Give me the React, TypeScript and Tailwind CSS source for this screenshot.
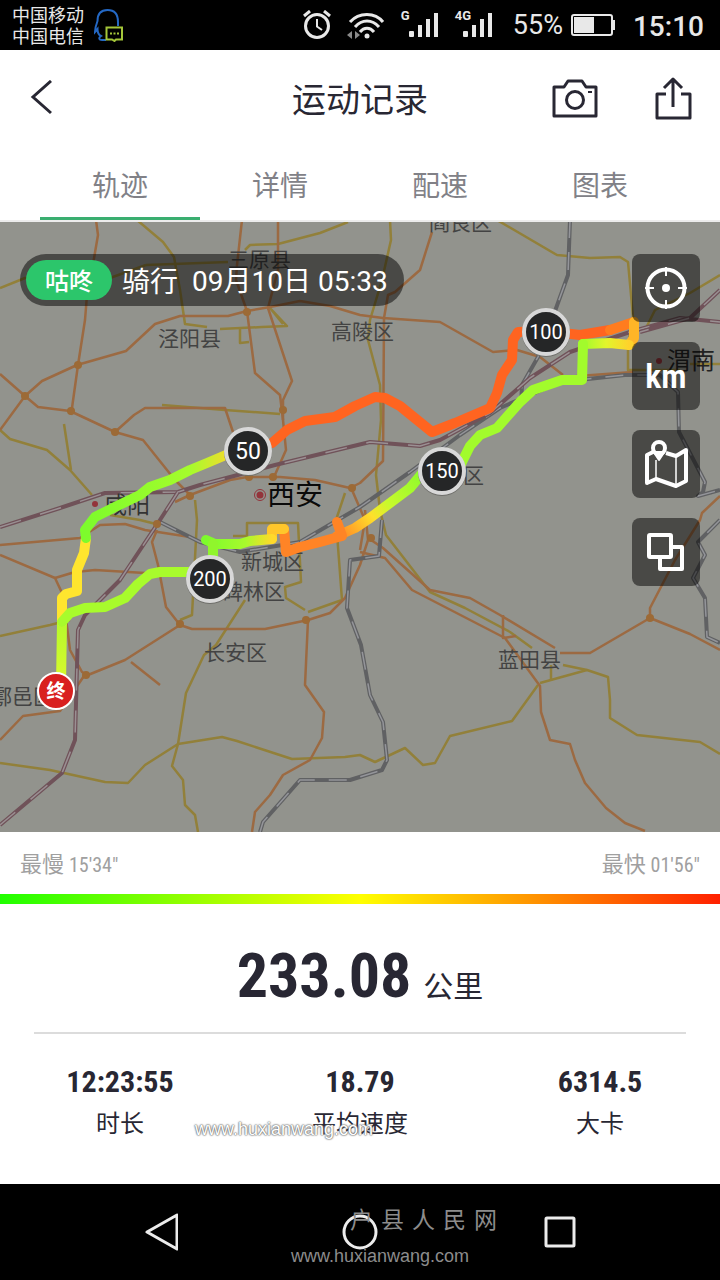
import { useState } from 'react';
import type { ReactNode } from 'react';

const TABS = ['轨迹', '详情', '配速', '图表'];

const STATS: { value: string; label: string }[] = [
  { value: '12:23:55', label: '时长' },
  { value: '18.79', label: '平均速度' },
  { value: '6314.5', label: '大卡' },
];

const NUM_FONT = "font-['Roboto_Condensed','Roboto',sans-serif]";

const MAIN_ROADS = [
  '96,0 98,15 92,50 87,75 85,100 78,145 71,195',
  '0,154 25,176 38,187 70,191 115,212 143,220 155,235 175,260 190,275',
  '0,210 25,176 42,161 77,145 126,131 155,104 180,96 228,96 247,91 270,87 300,81 330,86 360,95 383,98 440,102 493,132 517,130 540,137 563,155',
  '242,0 237,45 236,60 247,91 255,153 280,175 283,200 286,230 274,257',
  '278,0 278,50 268,88 292,161 283,180 283,200',
  '115,212 134,195 145,188 225,188 233,212',
  '175,282 190,275 230,260 247,257 280,257 315,260 350,268 360,263 383,241 384,98 388,75 395,72 420,50 432,12',
  '0,325 80,318 100,305 125,304 145,310 190,317',
  '0,335 55,358 63,375 70,430 82,452 88,455 125,440 180,405 166,387 158,345 152,322 157,310',
  '55,358 75,352 95,350 145,353',
  '180,405 192,409 265,409 308,400 330,393 345,378 360,345 368,320 365,290',
  '308,400 305,465 324,492 322,518 310,540 283,555 270,575 255,592 252,612',
  '131,442 160,465',
  '0,520 23,496 60,491 84,456',
  '368,318 383,328 430,370 470,378 500,395 555,428',
  '360,332 385,338 412,370 505,418 540,466 541,492 550,520 570,524 575,540 585,563 606,588 625,603 645,611',
  '503,395 503,418 516,416',
  '560,433 590,433 650,398 650,388 675,340 700,300 702,293 720,276',
  '650,398 690,414 720,430',
  '633,152 565,157',
  '352,270 365,300 360,330',
];

const SIDE_ROADS = [
  '137,0 163,22 174,37 180,70 185,104 207,107',
  '146,45 228,42',
  '220,109 262,107 287,106 270,88 283,104',
  '240,107 240,123 249,122',
  '0,68 25,58 110,58 146,45',
  '245,30 250,25 278,24 320,13 348,2',
  '162,185 225,190 280,194',
  '64,204 71,250',
  '0,210 10,219 47,230 70,250 92,275',
  '390,0 391,20 382,60 370,100 368,120 380,165 381,200 376,255 380,290 386,315 430,372 465,388 510,412 532,428',
  '497,0 557,35 590,38 620,37 628,42 633,97 628,125 628,150 680,150',
  '720,55 690,73 655,90 645,110',
  '0,543 50,550 105,562 128,563 145,545 178,524 222,517 237,521 292,539 345,537 360,535 375,542 405,528 423,545 435,543 450,516 512,501 538,465',
  '198,612 195,595 185,585 183,560 172,546 178,524 186,473 204,435 216,425 245,380',
  '0,416 50,405 70,400',
  '195,280 197,300 192,395 180,400',
  '247,325 247,303 298,303 301,362 285,367 286,378 305,390',
  '233,316 247,316',
  '345,273 336,300 342,380 308,392',
  '563,445 587,450 608,457 610,480 610,498 637,515 700,522 720,534',
  '551,445 551,461',
  '540,463 587,450',
  '110,295 140,300 160,305',
  '720,144 690,144',
];

const HIGH_SPEED_RAIL = [
  '0,307 60,288 105,273 178,272 200,265 275,245 370,222 420,226 440,220 490,193 530,158 570,132 630,112 680,98 720,102',
  '720,70 690,98 640,112',
  '178,272 160,300 120,360 85,395 78,410 75,520 62,553 0,605',
];

const RAIL = [
  '570,0 568,55 550,105 538,137 522,165 521,185',
  '300,322 360,287 410,252 460,215 500,188 560,162 625,155 660,155 678,172 679,212 705,262 703,272 698,276 720,270',
  '382,300 379,336 350,340 347,388 361,425 370,475 383,502 387,540 382,550 350,560 300,560 263,602 260,612',
  '160,302 200,322 240,332 300,322',
  '720,300 698,322 705,335 693,358 705,378 707,417 720,423',
];

const JUNCTIONS = [
  [78, 145], [25, 176], [71, 191], [115, 212], [247, 92], [283, 190], [249, 257], [352, 268],
  [180, 404], [306, 400], [86, 455], [157, 304], [190, 276], [371, 318], [650, 398], [273, 257],
];

const LABELS: { x: number; y: number; text: string }[] = [
  { x: 228, y: 47, text: '三原县' },
  { x: 158, y: 126, text: '泾阳县' },
  { x: 331, y: 119, text: '高陵区' },
  { x: 429, y: 10, text: '阎良区' },
  { x: 463, y: 263, text: '区' },
  { x: 241, y: 349, text: '新城区' },
  { x: 222, y: 379, text: '碑林区' },
  { x: 204, y: 440, text: '长安区' },
  { x: 498, y: 447, text: '蓝田县' },
  { x: -9, y: 484, text: '鄠邑区' },
];

const TRACK: { color: string; points: string }[] = [
  { color: 'url(#finishLeg)', points: '61,465 62,402' },
  { color: '#ffe52e', points: '62,402 62,378 66,374 77,371 77,350 84,333 86,318' },
  { color: 'url(#westLeg)', points: '86,318 85,310 95,297 115,287 140,275 150,267 170,260 190,250 207,243 240,229' },
  { color: '#ff6420', points: '272,223 287,210 305,201 335,197 355,186 375,177 385,178 400,186 432,212 455,203 490,188 497,173 502,155 512,140 513,120 518,112 545,111 580,115 610,110' },
  { color: '#ff7c1e', points: '610,110 634,102' },
  { color: '#ffb527', points: '634,102 634,118 629,125' },
  { color: 'url(#turnLeg)', points: '629,125 610,123 583,124' },
  { color: '#a2fb2c', points: '583,124 582,160 562,160 533,170 520,182 497,208 480,215 470,226 460,246' },
  { color: 'url(#cityLeg)', points: '425,250 410,268 390,283 370,298 355,308 337,316' },
  { color: '#ff8426', points: '337,302 342,316 320,322 300,327 286,332 284,309' },
  { color: '#ffc72b', points: '284,309 272,309 272,319' },
  { color: 'url(#innerLeg)', points: '272,319 250,321 240,324 215,324 206,320' },
  { color: '#90f52c', points: '213,324 213,345' },
  { color: '#a8fb2c', points: '195,352 160,352 150,354 138,364 125,378 105,387 85,388 70,393 62,402' },
];

const MARKERS: { x: number; y: number; text: string; size: number }[] = [
  { x: 248, y: 231, text: '50', size: 23 },
  { x: 546, y: 112, text: '100', size: 20 },
  { x: 442, y: 251, text: '150', size: 20 },
  { x: 210, y: 359, text: '200', size: 20 },
];

function StatusBar() {
  return (
    <div className="flex h-[50px] items-center bg-black px-3 text-[#e8e8e8]">
      <div className="text-[18px] leading-[21px]">
        <div>中国移动</div>
        <div>中国电信</div>
      </div>
      <svg className="ml-[10px]" width="30" height="34" viewBox="0 0 30 34" fill="none">
        <path
          d="M24 18V14C24 6 20 2 13.500 2S3.500 6 3.500 13C2 17 1 20 1 24L3.500 21C3.500 24 5 27 7 28C4 30 5 32 8 32H12"
          stroke="#2468c4"
          strokeWidth="2"
        />
        <path d="M12.500 19.500H28V31.500H22L20.500 33L18 31.500H12.500Z" stroke="#a4c639" strokeWidth="2" />
        <path d="M16 25.500H25" stroke="#a4c639" strokeWidth="2" strokeDasharray="2 1.500" />
      </svg>
      <div className="ml-auto flex items-center">
        <svg width="28" height="30" viewBox="0 0 28 30" fill="none" stroke="currentColor">
          <circle cx="14" cy="16" r="11.500" strokeWidth="3" />
          <path d="M14 9V16.500L19 20" strokeWidth="2" />
          <path d="M1 6L7 1M27 6L21 1" strokeWidth="3" />
        </svg>
        <svg className="ml-4" width="38" height="30" viewBox="0 0 38 30" fill="none" stroke="currentColor">
          <path d="M3 12C12 2 28 2 36 12" strokeWidth="3" />
          <path d="M8 17C15 9 25 9 32 17" strokeWidth="3" />
          <path d="M13 22C17 17 23 17 27 22" strokeWidth="3" />
          <circle cx="20" cy="26" r="2.500" fill="currentColor" stroke="none" />
          <path d="M0 25L5 21V29ZM13 25L8 21V29Z" fill="currentColor" stroke="none" opacity="0.6" />
        </svg>
        <Signal type="G" />
        <Signal type="4G" />
        <span className="ml-5 font-['Roboto',sans-serif] text-[27px] leading-8">55%</span>
        <svg className="ml-2" width="44" height="22" viewBox="0 0 44 22" fill="none">
          <rect x="1" y="1" width="40" height="20" rx="2" stroke="currentColor" strokeWidth="2" />
          <rect x="3" y="3" width="20" height="16" fill="currentColor" />
          <path d="M43 6V16" stroke="currentColor" strokeWidth="2" />
        </svg>
        <span className="ml-[18px] mr-1 pt-1 font-['Roboto',sans-serif] text-[28px] font-medium leading-8">15:10</span>
      </div>
    </div>
  );
}

function Signal({ type }: { type: string }) {
  return (
    <div className="ml-4 flex h-[34px] items-end pb-1">
      <span className="w-2 self-start font-['Roboto',sans-serif] text-[13px] font-bold leading-4">{type}</span>
      <svg width="30" height="26" viewBox="0 0 30 26" fill="currentColor">
        <rect x="0" y="19" width="5" height="6" rx="1" />
        <rect x="9" y="13" width="4" height="12" />
        <rect x="17" y="7" width="4" height="18" />
        <rect x="25" y="1" width="4" height="24" />
      </svg>
    </div>
  );
}

function Header() {
  return (
    <header className="flex h-[100px] items-center justify-between px-7 pb-1">
      <div className="flex w-36">
        <button type="button" aria-label="返回">
          <svg width="26" height="36" viewBox="0 0 26 36" fill="none" stroke="#282733" strokeWidth="3">
            <path d="M23 1L5 17L23 33" />
          </svg>
        </button>
      </div>
      <h1 className="text-[34px] leading-10 text-[#282733]">运动记录</h1>
      <div className="flex w-36 items-center justify-end gap-14">
        <button type="button" aria-label="拍照">
          <svg width="46" height="40" viewBox="0 0 46 40" fill="none" stroke="#282733" strokeWidth="3" strokeLinejoin="round">
            <path d="M2 9H12L16 3H30L34 9H44V38H2Z" />
            <circle cx="23" cy="22" r="8.500" />
            <path d="M36 14H40" strokeWidth="2" />
          </svg>
        </button>
        <button type="button" aria-label="分享">
          <svg width="38" height="44" viewBox="0 0 38 44" fill="none" stroke="#282733" strokeWidth="3" strokeLinejoin="round">
            <path d="M12 18H3V42H36V18H27" />
            <path d="M19 31V3M10 12L19 3L28 12" />
          </svg>
        </button>
      </div>
    </header>
  );
}

function TrackMap() {
  return (
    <svg className="block h-auto w-full bg-[#92938d]" viewBox="0 2 720 610" role="img" aria-label="骑行轨迹地图">
      <defs>
        <linearGradient id="finishLeg" gradientUnits="userSpaceOnUse" x1="62" y1="465" x2="62" y2="402">
          <stop offset="0" stopColor="#dbf92d" />
          <stop offset="1" stopColor="#b6f92c" />
        </linearGradient>
        <linearGradient id="westLeg" gradientUnits="userSpaceOnUse" x1="85" y1="0" x2="235" y2="0">
          <stop offset="0" stopColor="#7dfb2c" />
          <stop offset="0.700" stopColor="#a5fc2c" />
          <stop offset="1" stopColor="#ffd62c" />
        </linearGradient>
        <linearGradient id="turnLeg" gradientUnits="userSpaceOnUse" x1="629" y1="0" x2="583" y2="0">
          <stop offset="0" stopColor="#ffd22b" />
          <stop offset="0.500" stopColor="#e2f52c" />
          <stop offset="1" stopColor="#a2fb2c" />
        </linearGradient>
        <linearGradient id="cityLeg" gradientUnits="userSpaceOnUse" x1="420" y1="250" x2="342" y2="316">
          <stop offset="0" stopColor="#8dfb2c" />
          <stop offset="0.450" stopColor="#c8fa2c" />
          <stop offset="0.650" stopColor="#ffe02b" />
          <stop offset="1" stopColor="#ff8c26" />
        </linearGradient>
        <linearGradient id="innerLeg" gradientUnits="userSpaceOnUse" x1="272" y1="0" x2="206" y2="0">
          <stop offset="0" stopColor="#ffd92b" />
          <stop offset="0.400" stopColor="#a8fa2c" />
          <stop offset="1" stopColor="#7dfb2c" />
        </linearGradient>
      </defs>

      <g fill="none" strokeLinejoin="round">
        {SIDE_ROADS.map((p) => (
          <polyline key={p} points={p} stroke="#92803a" strokeWidth="2.500" />
        ))}
        {MAIN_ROADS.map((p) => (
          <polyline key={p} points={p} stroke="#9c6a42" strokeWidth="2.500" />
        ))}
        {RAIL.map((p) => (
          <g key={p}>
            <polyline points={p} stroke="#606163" strokeWidth="4" />
            <polyline points={p} stroke="#94959a" strokeWidth="1.500" strokeDasharray="18 14" />
          </g>
        ))}
        {HIGH_SPEED_RAIL.map((p) => (
          <g key={p}>
            <polyline points={p} stroke="#705259" strokeWidth="4" />
            <polyline points={p} stroke="#9a9093" strokeWidth="1.500" strokeDasharray="22 20" />
          </g>
        ))}
      </g>
      {JUNCTIONS.map(([x, y]) => (
        <circle key={`${x}-${y}`} cx={x} cy={y} r="4" fill="#9c6a36" />
      ))}

      <g className="font-['Noto_Sans_CJK_SC',sans-serif] text-[21px]" fill="#434343">
        {LABELS.map((l) => (
          <text key={l.text + l.x} x={l.x} y={l.y}>
            {l.text}
          </text>
        ))}
        <text x="104" y="293" className="text-[23px]" fill="#333">
          咸阳
        </text>
        <text x="667" y="149" className="text-[24px]" fill="#222">
          渭南
        </text>
        <text x="267" y="285" className="text-[28px]" fill="#0a0a0a">
          西安
        </text>
      </g>
      <g fill="#93343b">
        <circle cx="260" cy="275" r="3.500" />
        <circle cx="260" cy="275" r="5.500" fill="none" stroke="#93343b" />
        <circle cx="95" cy="284" r="3" />
        <circle cx="659" cy="141" r="3" />
      </g>

      <g fill="none" strokeWidth="10" strokeLinejoin="round" strokeLinecap="round">
        {TRACK.map((t) => (
          <polyline key={t.points} points={t.points} stroke={t.color} />
        ))}
      </g>

      {MARKERS.map((m) => (
        <g key={m.text}>
          <circle cx={m.x} cy={m.y + 1} r="24" fill="#6f6f6b" />
          <circle cx={m.x} cy={m.y} r="22" fill="#252627" stroke="#d8d8d8" strokeWidth="4" />
          <text
            x={m.x}
            y={m.y + (m.size === 23 ? 8 : 7)}
            textAnchor="middle"
            fill="#fff"
            fontSize={m.size}
            className="font-['Roboto',sans-serif]"
          >
            {m.text}
          </text>
        </g>
      ))}
      <circle cx="56" cy="471" r="18" fill="#d9201f" stroke="#fff" strokeWidth="2" />
      <text
        x="56"
        y="478"
        textAnchor="middle"
        fill="#fff"
        className="font-['Noto_Sans_CJK_SC',sans-serif] text-[19px] font-bold"
      >
        终
      </text>
    </svg>
  );
}

function MapButton({ label, children }: { label: string; children: ReactNode }) {
  return (
    <button
      type="button"
      aria-label={label}
      className="flex size-[68px] items-center justify-center rounded-lg bg-black/50 text-white"
    >
      {children}
    </button>
  );
}

function MapTools() {
  return (
    <div className="absolute right-5 top-8 flex flex-col gap-5">
      <MapButton label="定位">
        <svg width="44" height="44" viewBox="0 0 44 44" fill="none" stroke="currentColor">
          <circle cx="22" cy="22" r="18.500" strokeWidth="4" />
          <circle cx="22" cy="22" r="4" fill="currentColor" stroke="none" />
          <path d="M22 1V10M22 34V43M1 22H10M34 22H43" strokeWidth="2" />
        </svg>
      </MapButton>
      <MapButton label="公里标记">
        <span className={`text-[34px] font-semibold leading-9 ${NUM_FONT}`}>km</span>
      </MapButton>
      <MapButton label="地图类型">
        <svg width="44" height="48" viewBox="0 0 44 48" fill="none" stroke="currentColor" strokeWidth="4" strokeLinejoin="round">
          <path d="M9 12L3 15V43L12 39L32 46L42 41V10L32 16L22 13" />
          <path d="M12 20V39M32 16V45" strokeWidth="1.500" />
          <circle cx="15" cy="8" r="6" />
          <path d="M9 11L15 20L21 11" fill="currentColor" strokeWidth="2" />
          <circle cx="15" cy="8" r="3" fill="#494946" stroke="none" />
        </svg>
      </MapButton>
      <MapButton label="图层">
        <svg width="38" height="38" viewBox="0 0 38 38" fill="none" stroke="currentColor" strokeWidth="4" strokeLinejoin="round">
          <rect x="2" y="2" width="22" height="22" rx="1" />
          <path d="M25 14H35V36H13V25" />
        </svg>
      </MapButton>
    </div>
  );
}

export default function App() {
  const [tab, setTab] = useState(TABS[0]);

  return (
    <div className="relative bg-white font-['Noto_Sans_CJK_SC',sans-serif]">
      <StatusBar />
      <Header />

      <nav className="grid grid-cols-4 border-b-2 border-[#ececec] px-10">
        {TABS.map((t) => (
          <button
            key={t}
            type="button"
            onClick={() => setTab(t)}
            className={`h-[70px] border-b-3 text-[28px] leading-8 text-[#818187] ${
              t === tab ? 'border-[#3aae70]' : 'border-transparent'
            }`}
          >
            {t}
          </button>
        ))}
      </nav>

      <div className="relative">
        <TrackMap />
        <div className="absolute left-5 top-8 flex h-[52px] items-center rounded-full bg-black/50 pl-[6px] pr-4 text-[28px] leading-10 text-white">
          <span className="rounded-full bg-[#2cc66b] px-[19px] text-[24px] font-medium leading-10">咕咚</span>
          <span className="ml-[10px]">骑行</span>
          <span className="ml-[14px] pt-1 font-['Roboto','Noto_Sans_CJK_SC',sans-serif]">09月10日 05:33</span>
        </div>
        <MapTools />
      </div>

      <div className="flex h-[62px] items-center justify-between px-5 text-[22px] leading-8 text-[#a0a0a0]">
        <span>
          最慢 <span className={`text-[20px] ${NUM_FONT}`}>15'34"</span>
        </span>
        <span>
          最快 <span className={`text-[20px] ${NUM_FONT}`}>01'56"</span>
        </span>
      </div>
      <div className="h-[10px] bg-[linear-gradient(to_right,#20ff00,#ffff00_50%,#ff2000)]" />

      <div className="flex h-32 items-baseline justify-center gap-3 pt-8 text-[#282733]">
        <span className={`text-[62px] font-bold leading-20 ${NUM_FONT}`}>233.08</span>
        <span className="text-[30px] leading-10">公里</span>
      </div>
      <div className="mx-[34px] h-[2px] bg-[#dcdcdc]" />

      <div className="grid h-[150px] grid-cols-3 pt-7 text-center text-[#282733]">
        {STATS.map((s) => (
          <div key={s.label}>
            <div className={`text-[30px] font-bold leading-10 ${NUM_FONT}`}>{s.value}</div>
            <div className="mt-[2px] text-[24px] leading-9">{s.label}</div>
          </div>
        ))}
      </div>

      <div className="relative h-24 bg-black">
        <div className="grid h-full grid-cols-3 px-[60px] text-[#ececec]">
          <button type="button" aria-label="后退" className="flex items-center justify-center">
            <svg width="36" height="38" viewBox="0 0 36 38" fill="none" stroke="currentColor" strokeWidth="3" strokeLinejoin="round">
              <path d="M35 2V36L5 19Z" />
            </svg>
          </button>
          <button type="button" aria-label="主页" className="flex items-center justify-center">
            <svg width="36" height="36" viewBox="0 0 36 36" fill="none" stroke="currentColor" strokeWidth="3">
              <circle cx="18" cy="18" r="16" />
            </svg>
          </button>
          <button type="button" aria-label="最近任务" className="flex items-center justify-center">
            <svg width="32" height="32" viewBox="0 0 32 32" fill="none" stroke="currentColor" strokeWidth="3">
              <rect x="2" y="2" width="28" height="28" rx="1" />
            </svg>
          </button>
        </div>
        <div className="pointer-events-none absolute left-[350px] top-[18px] flex gap-2 text-[23px] leading-8 text-[#8c8c8c]">
          {['户', '县', '人', '民', '网'].map((c) => (
            <span key={c}>{c}</span>
          ))}
        </div>
        <span className="pointer-events-none absolute left-[291px] top-[60px] font-['Liberation_Sans',sans-serif] text-[18px] leading-6 text-[#8c8c8c]">
          www.huxianwang.com
        </span>
        <span className="pointer-events-none absolute -top-[67px] left-[195px] font-['Liberation_Sans',sans-serif] text-[18px] leading-6 text-white [text-shadow:0_0_1px_#666,0_0_2px_#666,0_0_2px_#888]">
          www.huxianwang.com
        </span>
      </div>
    </div>
  );
}
